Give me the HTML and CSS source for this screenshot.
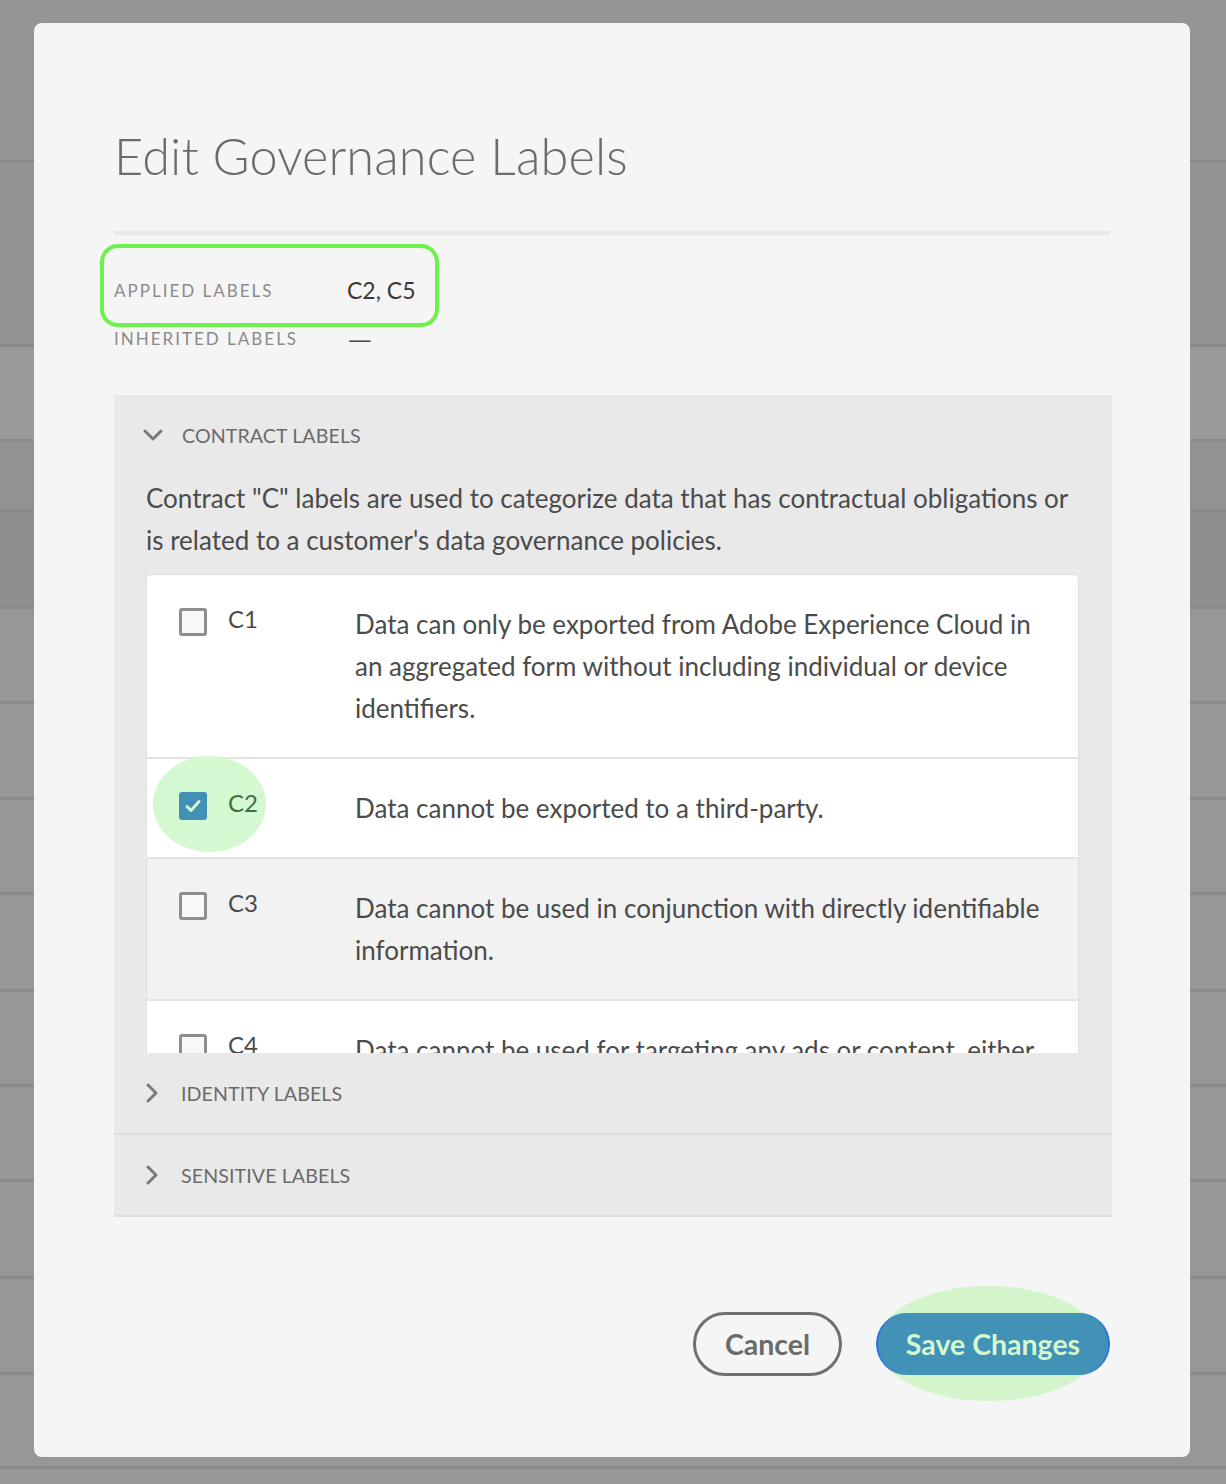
FILE: index.html
```html
<!DOCTYPE html>
<html>
<head>
<meta charset="utf-8">
<link rel="stylesheet" href="styles.css">
</head>
<body>
<div class="page">
  <div class="bg-row r1"></div>
  <div class="bg-row r2"></div>
  <div class="bg-row r3"></div>
  <div class="bg-row r4"></div>
  <div class="bg-row r5"></div>
  <div class="bg-row r6"></div>
  <div class="bg-row r7"></div>
  <div class="bg-row r8"></div>
  <div class="bg-row r9"></div>
  <div class="bg-row r10"></div>
  <div class="bg-row r11"></div>
  <div class="bg-row r12"></div>
  <div class="bg-row r13"></div>
  <div class="bg-row r14"></div>
  <div class="bg-row r15"></div>
</div>

<div class="modal">
  <h1 class="title">Edit Governance Labels</h1>
  <div class="divider"></div>

  <div class="summary">
    <div class="highlight-box"></div>
    <div class="sum-row">
      <span class="sum-label">APPLIED LABELS</span>
      <span class="sum-value">C2, C5</span>
    </div>
    <div class="sum-row">
      <span class="sum-label">INHERITED LABELS</span>
      <span class="sum-dash">—</span>
    </div>
  </div>

  <div class="accordion">
    <div class="acc-item open">
      <div class="acc-header">
        <svg class="chev" width="20" height="12" viewBox="0 0 20 12"><path d="M2 2 L10 10 L18 2" fill="none" stroke="#7a7a7a" stroke-width="3" stroke-linecap="round" stroke-linejoin="round"/></svg>
        <span class="acc-title">CONTRACT LABELS</span>
      </div>
      <div class="acc-body">
        <p class="acc-desc">Contract "C" labels are used to categorize data that has contractual obligations or is related to a customer's data governance policies.</p>
        <div class="table">
          <div class="trow">
            <div class="cell-check"><span class="checkbox"></span></div>
            <div class="cell-label">C1</div>
            <div class="cell-desc">Data can only be exported from Adobe Experience Cloud in an aggregated form without including individual or device identifiers.</div>
          </div>
          <div class="trow">
            <div class="cell-check"><span class="spot"></span><span class="checkbox checked"><svg width="18" height="16" viewBox="0 0 18 16"><path d="M3 8.5 L7 12.5 L15 3.5" fill="none" stroke="#d4f7d0" stroke-width="3" stroke-linecap="round" stroke-linejoin="round"/></svg></span></div>
            <div class="cell-label green">C2</div>
            <div class="cell-desc">Data cannot be exported to a third-party.</div>
          </div>
          <div class="trow hover">
            <div class="cell-check"><span class="checkbox"></span></div>
            <div class="cell-label">C3</div>
            <div class="cell-desc">Data cannot be used in conjunction with directly identifiable information.</div>
          </div>
          <div class="trow">
            <div class="cell-check"><span class="checkbox"></span></div>
            <div class="cell-label">C4</div>
            <div class="cell-desc">Data cannot be used for targeting any ads or content, either on-site or cross-site.</div>
          </div>
        </div>
      </div>
    </div>
    <div class="acc-item">
      <div class="acc-header">
        <svg class="chev-r" width="12" height="20" viewBox="0 0 12 20"><path d="M2 2 L10 10 L2 18" fill="none" stroke="#7a7a7a" stroke-width="3" stroke-linecap="round" stroke-linejoin="round"/></svg>
        <span class="acc-title">IDENTITY LABELS</span>
      </div>
    </div>
    <div class="acc-item">
      <div class="acc-header">
        <svg class="chev-r" width="12" height="20" viewBox="0 0 12 20"><path d="M2 2 L10 10 L2 18" fill="none" stroke="#7a7a7a" stroke-width="3" stroke-linecap="round" stroke-linejoin="round"/></svg>
        <span class="acc-title">SENSITIVE LABELS</span>
      </div>
    </div>
  </div>

  <div class="footer">
    <button class="btn btn-cancel">Cancel</button>
    <div class="save-wrap">
      <span class="save-spot"></span>
      <button class="btn btn-save">Save Changes</button>
    </div>
  </div>
</div>
</body>
</html>
```

FILE: styles.css
```css
* { box-sizing: border-box; }
html, body {
  margin: 0;
  padding: 0;
  width: 1226px;
  height: 1484px;
  overflow: hidden;
  font-family: "Lato", "Open Sans", sans-serif;
}
.page {
  display: flex;
  flex-direction: column;
  width: 1226px;
  height: 1484px;
  background: #979797;
}
.bg-row {
  flex: none;
  border-bottom: 3px solid #8a8a8a;
  background: #959595;
}
.r1 { height: 163px; }
.r2 { height: 184px; background: #939393; }
.r3 { height: 95px; background: #9a9a9a; }
.r4 { height: 70px; background: #929292; }
.r5 { height: 97px; background: #8f8f8f; }
.r6 { height: 95px; background: #979797; }
.r7 { height: 96px; background: #979797; }
.r8 { height: 95px; background: #979797; }
.r9 { height: 97px; background: #979797; }
.r10 { height: 95px; background: #979797; }
.r11 { height: 95px; background: #979797; }
.r12 { height: 97px; background: #979797; }
.r13 { height: 96px; background: #979797; }
.r14 { height: 94px; background: #979797; }
.r15 { height: 40px; background: #979797; border-bottom: none; }

.modal {
  position: absolute;
  left: 34px;
  top: 23px;
  width: 1156px;
  height: 1434px;
  background: #f5f5f5;
  border-radius: 8px;
  padding: 102px 78px 0 80px;
}
.title {
  margin: 0;
  font-family: "Lato", sans-serif;
  font-weight: 300;
  font-size: 50.5px;
  line-height: 61px;
  color: #6b6b6b;
  letter-spacing: 0.1px;
}
.divider {
  margin-top: 45px;
  height: 4px;
  width: 996px;
  background: #e8e8e8;
}
.summary {
  position: relative;
  margin-top: 31px;
}
.highlight-box {
  position: absolute;
  left: -14px;
  top: -22px;
  width: 339px;
  height: 83px;
  border: 4px solid #6ef04f;
  border-radius: 18px;
}
.sum-row {
  display: flex;
  align-items: center;
  height: 48px;
}
.sum-label {
  width: 233px;
  font-size: 17px;
  letter-spacing: 2px;
  color: #8a8a8a;
}
.sum-value {
  font-size: 23px;
  color: #3a3a3a;
}
.sum-dash {
  display: inline-block;
  font-size: 24px;
  color: #4a4a4a;
  transform: scaleX(1.35);
  transform-origin: left center;
}

.accordion {
  margin-top: 33px;
  width: 998px;
  background: #e9e9e9;
}
.acc-item {
  border-bottom: 2px solid #dedede;
}
.acc-item.open {
  height: 658px;
  overflow: hidden;
  border-bottom: none;
}
.acc-header {
  height: 80px;
  display: flex;
  align-items: center;
  padding-left: 29px;
}
.acc-item:not(.open) .acc-header { padding-left: 31px; }
.chev { margin-right: 19px; }
.chev-r { margin-right: 23px; margin-left: 1px; }
.acc-title {
  font-size: 19.6px;
  color: #6b6b6b;
  letter-spacing: 0.1px;
}
.acc-body {
  padding: 0 33px 0 32px;
}
.acc-desc {
  margin: 2px 0 0 0;
  font-size: 26px;
  line-height: 42px;
  color: #4b4b4b;
}
.table {
  margin-top: 13px;
  background: #fff;
  border: 1px solid #e0e0e0;
  border-radius: 5px 5px 0 0;
}
.trow {
  display: flex;
  align-items: flex-start;
  padding: 28px 0;
  border-bottom: 2px solid #e4e4e4;
}
.trow.hover { background: #f2f2f2; }
.cell-check {
  position: relative;
  width: 81px;
  padding-left: 32px;
  padding-top: 5px;
}
.checkbox {
  position: relative;
  display: flex;
  align-items: center;
  justify-content: center;
  width: 28px;
  height: 28px;
  border: 3px solid #8e8e8e;
  border-radius: 3px;
  background: #f8f8f8;
}
.checkbox.checked {
  border: none;
  background: #4191b6;
}
.spot {
  position: absolute;
  left: 6px;
  top: -31px;
  width: 113px;
  height: 96px;
  border-radius: 50%;
  background: #d4f8d0;
}
.cell-label {
  position: relative;
  width: 127px;
  font-size: 24px;
  line-height: 42px;
  margin-top: -5px;
  color: #4b4b4b;
}
.cell-label.green { color: #3f6e3f; }
.cell-desc {
  width: 692px;
  font-size: 26px;
  line-height: 42px;
  color: #4b4b4b;
}

.footer {
  display: flex;
  justify-content: flex-end;
  align-items: center;
  gap: 34px;
  margin-top: 95px;
  width: 996px;
}
.btn {
  font-family: "Lato", sans-serif;
  font-weight: 700;
  font-size: 28.5px;
  border-radius: 32px;
  cursor: pointer;
  padding: 0;
}
.btn-cancel {
  width: 149px;
  height: 64px;
  background: transparent;
  border: 3px solid #707070;
  color: #6b6b6b;
}
.save-wrap {
  position: relative;
  display: flex;
}
.save-spot {
  position: absolute;
  left: 1px;
  top: -27px;
  width: 224px;
  height: 115px;
  border-radius: 50%;
  background: #d2f5cc;
}
.btn-save {
  position: relative;
  width: 234px;
  height: 62px;
  background: #4291b6;
  color: #d4f8d0;
  border: none;
  border-left: 2px solid #2f70df;
  border-right: 2px solid #2f70df;
}
```
